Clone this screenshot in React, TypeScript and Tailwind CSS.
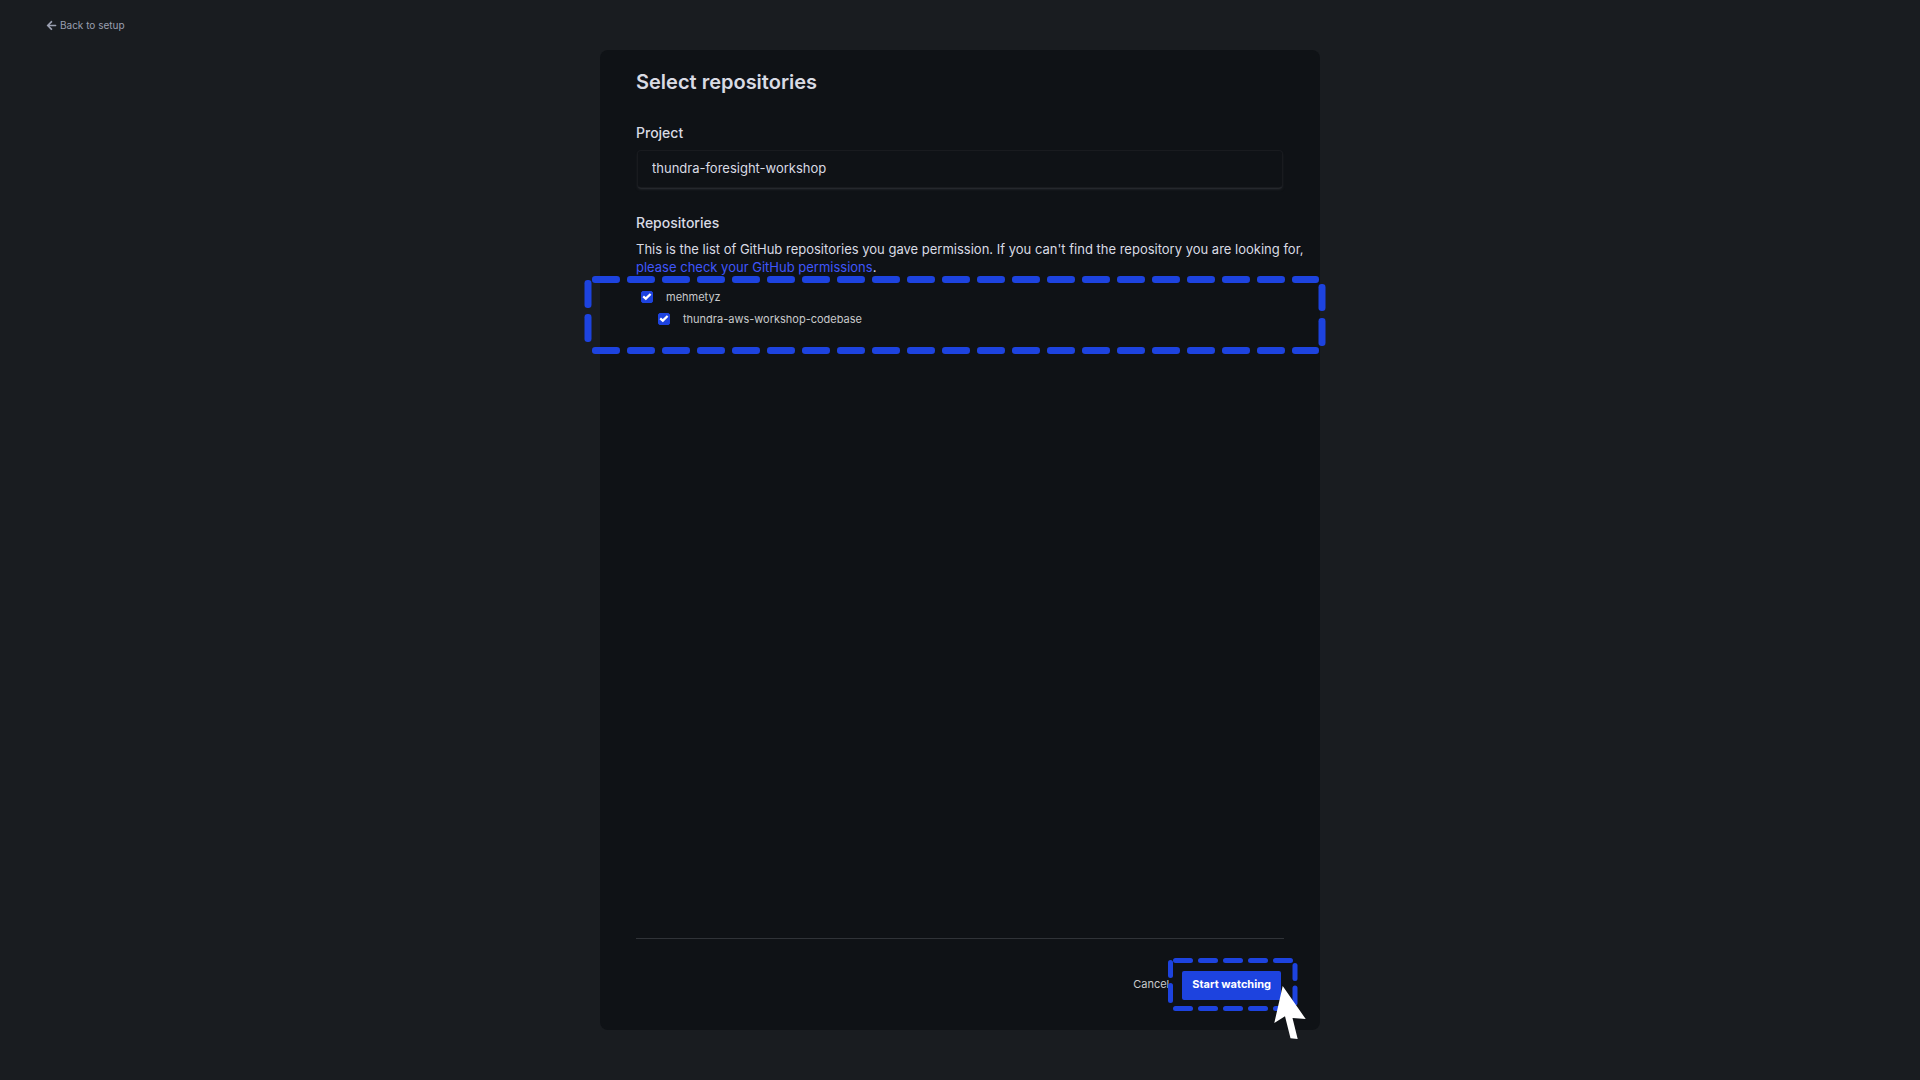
import React from "react";
import { FaArrowLeft } from "react-icons/fa";

const horizontalDashes = Array.from({ length: 21 }, (_, i) => 4 + i * 35);
const buttonDashes = [5, 30, 55, 80, 105];

function ListHighlight() {
  return (
    <svg
      className="pointer-events-none absolute -left-[52px] -top-[10px] h-[78px] w-[743px] fill-[#1d43df]"
      viewBox="0 0 743 78"
      aria-hidden="true"
    >
      {horizontalDashes.map((x) => (
        <g key={x}>
          <rect x={x + 4} y="0" width={x > 700 ? 27 : 28} height="7" rx="3.2" />
          <rect x={x + 4} y="71" width={x > 700 ? 27 : 28} height="7" rx="3.2" />
        </g>
      ))}
      <rect x="0.500" y="4" width="7" height="28" rx="3.2" />
      <rect x="0.500" y="38" width="7" height="28" rx="3.2" />
      <rect x="734.500" y="8" width="7" height="27" rx="3.2" />
      <rect x="734.500" y="42" width="7" height="28" rx="3.2" />
    </svg>
  );
}

function ButtonHighlight() {
  return (
    <svg
      className="pointer-events-none absolute -left-[14px] -top-3 h-[82px] w-[140px] fill-[#1d43df]"
      viewBox="0 0 140 82"
      aria-hidden="true"
    >
      {buttonDashes.map((x) => (
        <g key={x}>
          <rect x={x} y="0" width="20" height="5" rx="2.5" />
          <rect x={x} y="48" width="20" height="5" rx="2.5" />
        </g>
      ))}
      <rect x="0" y="2" width="5" height="18" rx="2.5" />
      <rect x="0" y="25" width="5" height="20" rx="2.5" />
      <rect x="124.500" y="5" width="5" height="18" rx="2.5" />
      <rect x="124.500" y="27.500" width="5" height="20" rx="2.5" />
      <path
        className="fill-white"
        d="M114.700 28 L106.300 65 L117 58.300 L122.500 80.300 L129.700 81 L124.500 60 L137.700 61 Z"
      />
    </svg>
  );
}

function RepoCheckbox({ id, label }: { id: string; label: string }) {
  return (
    <div className="flex h-[22px] items-center">
      <span className="relative block size-3">
        <input
          id={id}
          type="checkbox"
          defaultChecked
          className="peer block size-3 appearance-none rounded-xs border border-[#1d43df] checked:bg-[#1d43df]"
        />
        <svg
          className="pointer-events-none absolute inset-0 hidden size-3 peer-checked:block"
          viewBox="0 0 12 12"
          fill="none"
          stroke="white"
          strokeWidth="2.3"
          aria-hidden="true"
        >
          <path d="M2.200 5.400 L4.800 7.600 L9.600 3" />
        </svg>
      </span>
      <label htmlFor={id} className="pl-[13px] text-[11px] leading-4 text-[#c9cacc]">
        {label}
      </label>
    </div>
  );
}

export default function App() {
  return (
    <div className="relative min-h-screen bg-[#191c20] font-['Inter',sans-serif] text-[#d9dbe4]">
      <a href="#setup" className="absolute left-[46px] top-[17px] flex items-center gap-[3px] text-[10px] leading-4 text-[#9a9fb0]">
        <FaArrowLeft className="size-[11px]" />
        Back to setup
      </a>
      <div className="flex min-h-screen flex-col items-center py-[50px]">
        <main className="flex w-full max-w-[720px] grow flex-col rounded-lg bg-[#0f1216] px-9 pb-[30px] pt-[18px]">
          <h1 className="text-xl font-semibold leading-7">Select repositories</h1>

          <label htmlFor="project" className="mt-[27px] text-sm font-medium leading-5">
            Project
          </label>
          <input
            id="project"
            type="text"
            defaultValue="thundra-foresight-workshop"
            className="mx-0.5 mt-2 h-9 rounded-[3px] bg-[#0f1216] px-[14px] pb-0.5 text-[13px] shadow-[0_0_0_1px_#191b1f,0_1px_1px_#55585d,0_2px_3px_#2c2f33] outline-none"
          />

          <h2 className="mt-[26px] text-sm font-medium leading-5">Repositories</h2>
          <p className="-mr-6 mt-[7px] text-[13px] leading-[18px]">
            This is the list of GitHub repositories you gave permission. If you can't find the repository you are looking for,{" "}
            <a href="#permissions" className="text-[#3f56fb]">
              please check your GitHub permissions
            </a>
            .
          </p>

          <div className="relative mt-[10px] pl-[5px]">
            <ListHighlight />
            <RepoCheckbox id="owner" label="mehmetyz" />
            <div className="pl-[17px]">
              <RepoCheckbox id="codebase" label="thundra-aws-workshop-codebase" />
            </div>
          </div>

          <footer className="mt-auto flex items-center justify-end gap-[13px] border-t border-[#303338] pr-[3px] pt-[31px]">
            <button type="button" className="pb-0.5 text-[11px] leading-4 text-[#c9cacc]">
              Cancel
            </button>
            <div className="relative">
              <button type="button" className="h-[29px] rounded-[2px] bg-[#1d43df] px-[10px] pb-0.5 text-[11px] font-bold text-white">
                Start watching
              </button>
              <ButtonHighlight />
            </div>
          </footer>
        </main>
      </div>
    </div>
  );
}
